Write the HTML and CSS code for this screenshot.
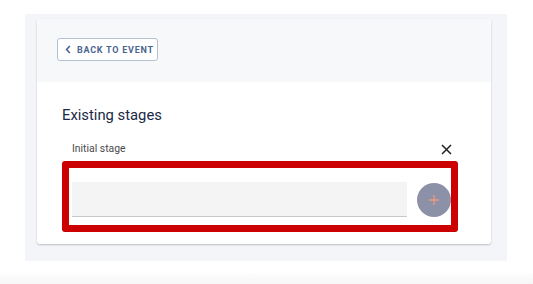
FILE: index.html
```html
<!DOCTYPE html>
<html lang="en">
<head>
    <meta charset="UTF-8">
    <meta name="viewport" content="width=device-width, initial-scale=1.0">
    <title>Stages</title>
    <link rel="stylesheet" href="styles.css">
</head>
<body>
    <div class="page">
        <div class="card">
            <div class="card-head">
                <button class="back-btn">
                    <svg width="6" height="9" viewBox="0 0 6 9"><path d="M4.8 1 L1.6 4.5 L4.8 8" fill="none" stroke="#4b6592" stroke-width="1.6"/></svg>
                    <span>Back to event</span>
                </button>
            </div>
            <div class="card-body">
                <h2>Existing stages</h2>
                <div class="stage-row">
                    <span class="stage-name">Initial stage</span>
                    <svg class="close" width="11" height="11" viewBox="0 0 11 11"><path d="M1 1 L10 10 M10 1 L1 10" stroke="#222" stroke-width="1.5"/></svg>
                </div>
                <div class="highlight">
                    <input type="text" class="stage-input">
                    <button class="add-btn">
                        <svg width="12" height="12" viewBox="0 0 12 12"><path d="M6 1 V11 M1 6 H11" stroke="#e89a82" stroke-width="1.4"/></svg>
                    </button>
                </div>
            </div>
        </div>
    </div>
    <div class="bottom-strip"></div>
</body>
</html>
```

FILE: styles.css
```css
body {
    margin: 0;
    background-color: #fff;
    font-family: Roboto, "Liberation Sans", sans-serif;
}

.page {
    margin: 14px 0 0 25px;
    width: 482px;
    height: 247px;
    box-sizing: border-box;
    padding: 5px 16px 17px 12px;
    background-color: #f4f5f9;
}

.card {
    height: 225px;
    background-color: #fff;
    border-radius: 3px;
    box-shadow: 0 1px 2px rgba(0, 0, 0, 0.22);
    overflow: hidden;
}

.card-head {
    height: 63px;
    box-sizing: border-box;
    padding: 19px 20px 0;
    background-color: #f7f8fa;
}

.back-btn {
    display: flex;
    align-items: center;
    gap: 6px;
    width: 101px;
    height: 23px;
    box-sizing: border-box;
    padding: 0 0 0 7px;
    background-color: #fff;
    border: 1px solid #b4c1d4;
    border-radius: 3px;
    color: #4b6592;
    font-family: Roboto, "Liberation Sans", sans-serif;
    font-size: 9px;
    font-weight: 700;
    letter-spacing: 0.75px;
    text-transform: uppercase;
    white-space: nowrap;
}

.card-body {
    padding: 23px 33px 12px 25px;
}

h2 {
    margin: 0;
    font-size: 14.8px;
    line-height: 20px;
    font-weight: 400;
    color: #1a2946;
}

.stage-row {
    display: flex;
    justify-content: space-between;
    align-items: center;
    margin-top: 17px;
    padding: 0 6px 0 10px;
    height: 14px;
}

.stage-name {
    font-size: 10.4px;
    line-height: 14px;
    color: #4a4a4a;
}

.highlight {
    display: flex;
    align-items: center;
    gap: 10px;
    margin-top: 5px;
    width: 396px;
    height: 71px;
    box-sizing: border-box;
    padding: 7px 0 1px 3px;
    border: 7px solid #cc0000;
    border-radius: 3px;
}

.stage-input {
    flex: 1;
    height: 35px;
    box-sizing: border-box;
    margin: 0;
    border: none;
    border-bottom: 1px solid #c8c8c8;
    background-color: #f4f4f4;
}

.add-btn {
    flex: none;
    display: flex;
    align-items: center;
    justify-content: center;
    width: 34px;
    height: 34px;
    padding: 0;
    border: none;
    border-radius: 50%;
    background-color: #8c91a8;
}

.bottom-strip {
    margin-top: 12px;
    height: 11px;
    background: linear-gradient(#fdfdfd, #f7f7f7);
}
```
